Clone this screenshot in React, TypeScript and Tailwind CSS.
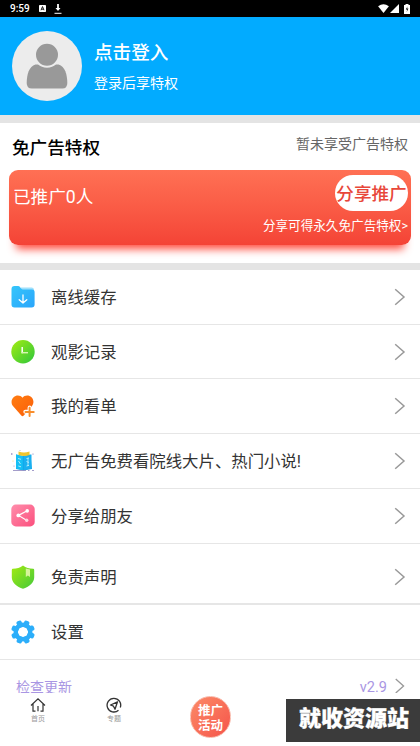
import React from 'react';

const FolderIcon = () => (
  <svg viewBox="0 0 24 24" className="w-6 h-6">
    <defs>
      <linearGradient id="folder" x1="0" y1="0" x2="1" y2="1">
        <stop offset="0" stopColor="#35c6fb" />
        <stop offset="1" stopColor="#2aa5fb" />
      </linearGradient>
    </defs>
    <path d="M10 2.5h10.500a2.500 2.500 0 0 1 2.500 2.500v6H10z" fill="#9fe0fb" />
    <path d="M.5 4A3 3 0 0 1 3.500 1H7q1.300 0 2.200 1.200L10.300 3.800q.6.8 1.600.8H21A2.600 2.600 0 0 1 23.600 7.200V19.500a3 3 0 0 1-3 3H3.500a3 3 0 0 1-3-3z" fill="url(#folder)" />
    <path d="M12 10v8M8.200 14.700 12 18l3.800-3.300" fill="none" stroke="#fff" strokeWidth="1.300" strokeLinecap="round" strokeLinejoin="round" />
  </svg>
);

const ClockIcon = () => (
  <svg viewBox="0 0 24 24" className="w-6 h-6">
    <defs>
      <linearGradient id="clock" x1="0" y1="0" x2="1" y2="1">
        <stop offset="0" stopColor="#a5ec12" />
        <stop offset="1" stopColor="#2cc63c" />
      </linearGradient>
    </defs>
    <circle cx="12" cy="11.700" r="11.700" fill="url(#clock)" />
    <path d="M11.200 7v6.300" stroke="#fff" strokeWidth="1.500" />
    <path d="M10.500 12.700h6.500" stroke="#d5f5b0" strokeWidth="1.400" />
  </svg>
);

const HeartIcon = () => (
  <svg viewBox="0 0 24 24" className="w-6 h-6">
    <defs>
      <linearGradient id="heart" x1="0" y1="0" x2="1" y2="1">
        <stop offset="0" stopColor="#ff7d12" />
        <stop offset="1" stopColor="#fb5e08" />
      </linearGradient>
    </defs>
    <path d="M11.500 3.800C13.500.8 18 .6 20.500 3.200c2.600 2.700 2.500 6.500.2 9.200L12.700 21.600q-1.200 1.200-2.400 0L2.400 12.600C-.3 9.500.1 5.500 2.600 3.200 5.200.8 9.500 1 11.500 3.800z" fill="url(#heart)" />
    <path d="M18.600 13.500v8.600M14.300 17.800h8.600" stroke="#fff" strokeWidth="4" strokeLinecap="round" />
    <path d="M18.600 13.800v8.200M14.500 17.900h8.200" stroke="#f98e2c" strokeWidth="2" strokeLinecap="round" />
  </svg>
);

const BooksIcon = () => (
  <svg viewBox="0 0 24 24" className="w-6 h-6">
    <path d="M5 5.500 12 7l7.500-1.500L21 20l-8.500 1.500L5 20z" fill="#12a9ea" />
    <path d="M5 5.500 11.700 7v14L5 19.500z" fill="#17c0f5" />
    <path d="M13 7 20.500 5.500v14L13 21z" fill="#1ab0f0" />
    <path d="M7.500 2.600q5.500 2 11 0v3.300q-5.500 2-11 0z" fill="#efc52c" />
    <path d="M7 9.500l3 .8M7.500 12l2 3M7.300 17l2.700.8M15.500 9.500l2.500-.6M15.500 12.500l2.500 1M15.500 17l2.500-.6M17 9v8" stroke="#bdeefa" strokeWidth=".9" />
    <path d="M2 21.500H15M17 21.500h1.500M21 21.500h2" stroke="#8d84bd" strokeWidth=".8" />
    <circle cx=".8" cy="5" r=".8" fill="#7b72b5" />
    <circle cx="9" cy="1.500" r=".5" fill="#aaa" />
    <circle cx="22" cy="5" r=".6" fill="#7b72b5" />
    <circle cx="2" cy="12" r=".5" fill="#f5cf65" />
    <circle cx="3" cy="17" r=".5" fill="#7777cc" />
  </svg>
);

const ShareIcon = () => (
  <svg viewBox="0 0 24 24" className="w-6 h-6">
    <defs>
      <linearGradient id="share" x1="0" y1="0" x2="1" y2="1">
        <stop offset="0" stopColor="#ff8eac" />
        <stop offset="1" stopColor="#fb4f7d" />
      </linearGradient>
    </defs>
    <rect x=".3" y=".6" width="23.400" height="21.800" rx="4.500" fill="url(#share)" />
    <path d="M16.200 6.800 7.500 11.400l8 4.800" fill="none" stroke="#fff" strokeWidth="1.200" />
    <circle cx="16.200" cy="6.900" r="1.800" fill="#fff" />
    <circle cx="7.300" cy="11.400" r="1.900" fill="#fff" />
    <circle cx="15.700" cy="16.200" r="1.700" fill="#ffd3df" />
  </svg>
);

const ShieldIcon = () => (
  <svg viewBox="0 0 24 24" className="w-6 h-6">
    <defs>
      <linearGradient id="shield" x1="0" y1="0" x2="1" y2="1">
        <stop offset="0" stopColor="#a3ea12" />
        <stop offset="1" stopColor="#45c93a" />
      </linearGradient>
    </defs>
    <path d="M12 .5c3 2.300 6 3.200 10.200 3.300q1 .1 1 1.200v7.500c0 5-5 9-10.400 11q-.8.3-1.600 0C5.800 21.500.8 17.500.8 12.500V5q0-1.100 1-1.200C6 3.700 9 2.800 12 .500z" fill="url(#shield)" />
    <path d="M14.800 3.600 19 4.600v7.400l-2.100-1.600-2.100 1.600z" fill="#d6f49b" />
  </svg>
);

const GearIcon = () => (
  <svg viewBox="0 0 24 24" className="w-6 h-6">
    <g fill="#2caefa">
      {[22, 67, 112, 157, 202, 247, 292, 337].map((deg) => (
        <rect key={deg} x="9.300" y=".1" width="5.400" height="7" rx="1.900" transform={`rotate(${deg} 12 12)`} />
      ))}
    </g>
    <circle cx="12" cy="12" r="7.300" fill="none" stroke="#2caefa" strokeWidth="4.400" />
  </svg>
);

const Chevron = ({ className = 'w-3 h-[18px]' }: { className?: string }) => (
  <svg viewBox="0 0 12 18" className={className}>
    <path d="M1.200 1.200 10 9l-8.800 7.800" fill="none" stroke="#999" strokeWidth="1.500" />
  </svg>
);

const rows = [
  { icon: FolderIcon, label: '离线缓存', box: 'h-[55px] border-b' },
  { icon: ClockIcon, label: '观影记录', box: 'h-[54px] border-b' },
  { icon: HeartIcon, label: '我的看单', box: 'h-[55px] border-b' },
  { icon: BooksIcon, label: '无广告免费看院线大片、热门小说!', box: 'h-[55px] border-b' },
  { icon: ShareIcon, label: '分享给朋友', box: 'h-[55px] border-b' },
  { icon: ShieldIcon, label: '免责声明', box: 'h-[61px] border-b-2 pt-[6px]' },
  { icon: GearIcon, label: '设置', box: 'h-[55px] border-b', noArrow: true },
];

export default function App() {
  return (
    <div className="relative flex h-[746px] w-[420px] flex-col overflow-hidden bg-white font-['Roboto','Noto_Sans_CJK_SC',sans-serif]">
      {/* Status bar */}
      <div className="flex h-[17px] shrink-0 items-center bg-black pl-[10px] pr-[10px] text-white">
        <span className="w-[29px] text-[10px] font-medium leading-none">9:59</span>
        <svg viewBox="0 0 8 8" className="h-[7px] w-[7px]">
          <rect width="8" height="8" rx=".8" fill="#fff" />
          <path d="M2.300 6 4 1.800 5.700 6M3 4.800h2" fill="none" stroke="#000" strokeWidth="1" />
        </svg>
        <svg viewBox="0 0 8 10" className="ml-[8px] h-[10px] w-[8px]">
          <path d="M4 0v6" stroke="#fff" strokeWidth="1.800" />
          <path d="M1.500 4h5L4 7z" fill="#fff" />
          <path d="M.5 9.300h7" stroke="#fff" strokeWidth="1" />
        </svg>
        <div className="ml-auto flex items-center">
          <svg viewBox="0 0 12 10" className="h-[9px] w-[11px]">
            <path d="M0 2.500Q6-2 12 2.500L6 10z" fill="#fff" />
          </svg>
          <svg viewBox="0 0 9 9" className="ml-[1px] h-[9px] w-[9px]">
            <path d="M9 0v9H0z" fill="#fff" />
          </svg>
          <svg viewBox="0 0 6 10" className="ml-[5px] h-[10px] w-[6px]">
            <path d="M1.500 1V0h3v1H6v9H0V1z" fill="#fff" />
            <path d="M3.600 2.200 1.800 5.500h1.400l-.6 2.700 1.800-3.600H3z" fill="#000" />
          </svg>
        </div>
      </div>

      {/* Profile header */}
      <div className="flex h-[98px] shrink-0 items-center bg-[#02abff] pl-[12px]">
        <svg viewBox="0 0 70 70" className="h-[70px] w-[70px]">
          <circle cx="35" cy="35" r="35" fill="#ececec" />
          <path d="M23.500 33.500h23C53 35 55.300 44 55.300 52q0 5.500-5 5.500H20q-5.300 0-5.300-5.500c0-8 2.300-17 8.800-18.500z" fill="#999" />
          <circle cx="35" cy="23.800" r="12" fill="#999" stroke="#ececec" strokeWidth="2" />
        </svg>
        <div className="ml-[12px] pt-[2px] text-white">
          <div className="text-[18.600px] font-medium leading-[30px]">点击登入</div>
          <div className="mt-[1px] text-[14px] leading-[28px]">登录后享特权</div>
        </div>
      </div>
      <div className="h-[8px] shrink-0 bg-[#e4e4e4]" />

      {/* Ad-free privilege */}
      <div className="h-[140px] shrink-0 px-[9px] pt-[10px]">
        <div className="flex h-[37px] items-start justify-between pl-[3px] pr-[3px]">
          <span className="pt-[1px] text-[17.600px] font-medium leading-[28px] text-black">免广告特权</span>
          <span className="text-[14px] leading-[22px] text-[#666]">暂未享受广告特权</span>
        </div>
        <div className="flex h-[75px] w-[402px] justify-between rounded-[9px] bg-linear-to-b from-[#ff7054] to-[#f44336] pl-[4px] pr-[3px] pt-[5px] text-white shadow-[0_11px_9px_-7px_#ff4a3d]">
          <span className="pt-[8px] text-[17.600px] leading-[28px]">已推广0人</span>
          <div className="flex flex-col items-end">
            <div className="flex h-[36px] w-[73px] items-center justify-center whitespace-nowrap rounded-full bg-white pt-[2px] text-[17.600px] font-medium text-[#e8473a]">
              分享推广
            </div>
            <div className="mt-[5px] text-[12.600px] leading-[20px]">分享可得永久免广告特权&gt;</div>
          </div>
        </div>
      </div>
      <div className="h-[7px] shrink-0 bg-[#e4e4e4]" />

      {/* Menu */}
      {rows.map((row) => {
        const Icon = row.icon;
        return (
          <div key={row.label} className={`flex shrink-0 items-center border-[#e6e6e6] pl-[11px] pr-[14px] ${row.box}`}>
            <Icon />
            <span className="ml-[16px] pt-[3px] text-[16.400px] text-[#333]">{row.label}</span>
            {!row.noArrow && (
              <div className="ml-auto">
                <Chevron />
              </div>
            )}
          </div>
        );
      })}
      <div className="flex h-[33px] shrink-0 items-start pl-[16px] pr-[14px] pt-[14px] text-[#a996e3]">
        <span className="text-[14px] leading-[26px]">检查更新</span>
        <span className="ml-auto text-[14.500px] leading-[27px]">v2.9</span>
        <Chevron className="ml-[7px] mt-[4px] h-[16px] w-[12px]" />
      </div>

      {/* Tab bar */}
      <div className="relative flex flex-1 items-start bg-white">
        <div className="flex w-[76px] flex-col items-center pt-[4px]">
          <svg viewBox="0 0 16 16" className="h-4 w-4" fill="none" stroke="#333" strokeWidth="1.200">
            <path d="M1 8.500 8 1.800l7 6.700M3 7v7.200h2.500M13 7v7.200h-2.500M8 9v5.300" />
          </svg>
          <span className="mt-[1px] text-[7px] leading-[10px] text-[#999]">首页</span>
        </div>
        <div className="flex w-[76px] flex-col items-center pt-[4px]">
          <svg viewBox="0 0 16 16" className="h-4 w-4" fill="none" stroke="#333" strokeWidth="1.300">
            <path d="M12.500 13.200A6.800 6.800 0 1 1 14.300 10.500" />
            <path d="M11.500 4.800 4.500 8l3 1.200 1.500 3z" strokeLinejoin="round" />
          </svg>
          <span className="mt-[1px] text-[7px] leading-[10px] text-[#999]">专题</span>
        </div>
        <div className="ml-[38px] mt-[3px] flex h-[42px] w-[41px] flex-col items-center justify-center rounded-full border border-[#f9b9aa] bg-linear-to-br from-[#fb8a68] to-[#f5524a] pt-[2px] text-[12.500px] font-bold leading-[15px] text-white">
          <span>推广</span>
          <span>活动</span>
        </div>
      </div>

      {/* Corner banner */}
      <div className="absolute left-[286px] top-[699px] flex h-[43px] w-[134px] items-center bg-[#3b3b3b] pl-[13px] pb-[3px]">
        <span className="whitespace-nowrap text-[22px] font-black leading-none text-white [-webkit-text-stroke:0.3px_white]">就收资源站</span>
      </div>
    </div>
  );
}
